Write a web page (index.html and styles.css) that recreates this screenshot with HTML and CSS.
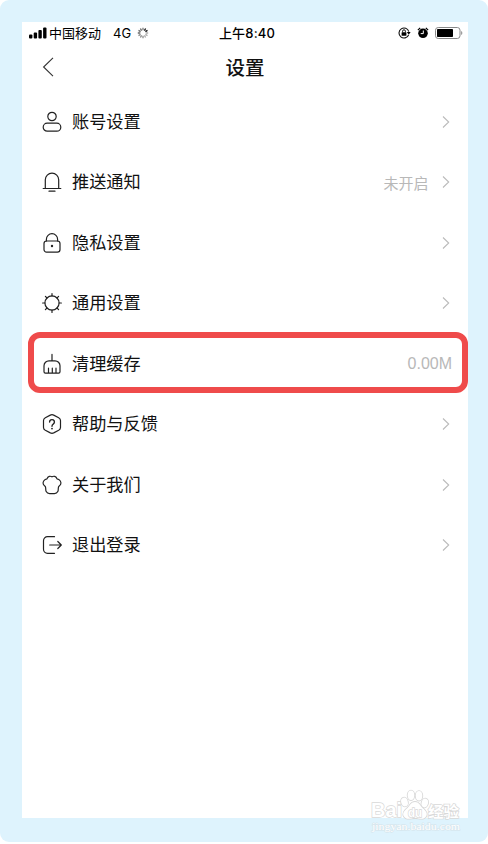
FILE: index.html
```html
<!DOCTYPE html>
<html lang="zh">
<head>
    <meta charset="UTF-8">
    <title>设置</title>
    <link rel="stylesheet" href="styles.css">
</head>
<body>

    <div class="frame">
        <div class="screen">
            <div class="status-bar">
                <div class="status-left">
                    <svg class="signal" width="18" height="12" viewBox="0 0 18 12">
                        <rect x="0" y="7.5" width="3.4" height="4" rx="1"/>
                        <rect x="4.7" y="5.5" width="3.4" height="6" rx="1"/>
                        <rect x="9.4" y="3" width="3.4" height="8.5" rx="1"/>
                        <rect x="14.1" y="0.5" width="3.4" height="11" rx="1"/>
                    </svg>
                    <span class="carrier">中国移动</span>
                    <span class="network">4G</span>
                    <svg class="spinner" width="12" height="12" viewBox="-6 -6 12 12">
                        <path d="M0-5.2V-2.7" stroke="#777"/>
                        <path d="M2.6-4.5 1.4-2.4M4.5-2.6 2.4-1.4" stroke="#111"/>
                        <path d="M5.2 0H2.7M4.5 2.6 2.4 1.4M2.6 4.5 1.4 2.4" stroke="#aaa"/>
                        <path d="M0 5.2V2.7M-2.6 4.5-1.4 2.4M-4.5 2.6-2.4 1.4" stroke="#888"/>
                        <path d="M-5.2 0H-2.7M-4.5-2.6-2.4-1.4M-2.6-4.5-1.4-2.4" stroke="#666"/>
                    </svg>
                </div>
                <div class="clock">上午8:40</div>
                <div class="status-right">
                    <svg class="rotation-lock" width="13" height="12" viewBox="0 0 13 12">
                        <path d="M10.6 8A5 5 0 1 1 10.8 4.6" fill="none" stroke="#111" stroke-width="1.1"/>
                        <path d="M8.8 5h3.8l-1.8 2.7z"/>
                        <rect x="3.6" y="5.2" width="4.8" height="3.6" rx=".5"/>
                        <path d="M4.6 5.4V4.2a1.4 1.4 0 0 1 2.8 0v1.2" fill="none" stroke="#111"/>
                    </svg>
                    <svg class="alarm" width="12" height="12" viewBox="0 0 12 12">
                        <circle cx="6" cy="6.3" r="4.8"/>
                        <path d="M.9 3.1 3.2.9M8.8.9l2.3 2.2" stroke="#000" stroke-width="1.3"/>
                        <path d="M6.3 3.5v3.1H3.7" fill="none" stroke="#fff"/>
                    </svg>
                    <svg class="battery" width="28" height="12" viewBox="0 0 28 12">
                        <rect x=".5" y=".5" width="24.5" height="11" rx="2.7" fill="none" stroke="#888"/>
                        <rect x="2" y="2" width="16" height="8" rx=".8"/>
                        <path d="M26.2 4v4c1.5-.6 1.5-3.4 0-4z" fill="#888"/>
                    </svg>
                </div>
            </div>

            <div class="nav-bar">
                <svg class="back" width="12" height="20" viewBox="0 0 12 20"><path d="M11 .8 1.6 10l9.4 9.2"/></svg>
                <h1>设置</h1>
            </div>

            <div class="menu">
                <div class="menu-item">
                    <svg class="icon" viewBox="0 0 20 20">
                        <circle cx="10" cy="4.5" r="4.2"/>
                        <rect x="1.2" y="11.2" width="17.6" height="8" rx="4"/>
                    </svg>
                    <span class="label">账号设置</span>
                    <svg class="arrow" viewBox="0 0 8 12"><path d="M1 .5 6.7 6 1 11.5"/></svg>
                </div>
                <div class="menu-item">
                    <svg class="icon" viewBox="0 0 20 20">
                        <path d="M3.3 16.5V7.8a6.7 6.7 0 0 1 13.4 0v8.7M1.2 16.5h17.6M7 19.2h6"/>
                    </svg>
                    <span class="label">推送通知</span>
                    <span class="value">未开启</span>
                    <svg class="arrow" viewBox="0 0 8 12"><path d="M1 .5 6.7 6 1 11.5"/></svg>
                </div>
                <div class="menu-item">
                    <svg class="icon" viewBox="0 0 20 20">
                        <rect x="2" y="8" width="16" height="11.2" rx="2.6"/>
                        <path d="M4.4 8V6.3a5.6 5.6 0 0 1 11.2 0V8"/>
                        <circle class="dot" cx="10" cy="13" r="1.2"/>
                    </svg>
                    <span class="label">隐私设置</span>
                    <svg class="arrow" viewBox="0 0 8 12"><path d="M1 .5 6.7 6 1 11.5"/></svg>
                </div>
                <div class="menu-item">
                    <svg class="icon" viewBox="0 0 20 20">
                        <circle cx="10" cy="10" r="7.1"/>
                        <path d="M10 2.9V.6M10 17.1v2.3M2.9 10H.6M17.1 10h2.3M5 5 3.4 3.400M15 5l1.6-1.6M5 15l-1.6 1.6M15 15l1.6 1.6"/>
                    </svg>
                    <span class="label">通用设置</span>
                    <svg class="arrow" viewBox="0 0 8 12"><path d="M1 .5 6.7 6 1 11.5"/></svg>
                </div>
                <div class="menu-item marked">
                    <svg class="icon" viewBox="0 0 20 20">
                        <path d="M10 .4v6.4M3.4 19.2Q2 19.2 2 17.8v-6a5 5 0 0 1 5-5h6a5 5 0 0 1 5 5v6q0 1.4-1.4 1.4zM6.5 19v-4.8M10.3 19v-4.8M14 19v-4.8"/>
                    </svg>
                    <span class="label">清理缓存</span>
                    <span class="value size">0.00M</span>
                </div>
                <div class="menu-item">
                    <svg class="icon" viewBox="0 0 20 20">
                        <path d="M8.3 1.1q1.7-.8 3.4 0l5 2.6q1.8 1 1.8 2.8v7q0 1.8-1.8 2.8l-5 2.6q-1.7.8-3.4 0l-5-2.6q-1.8-1-1.8-2.8v-7q0-1.8 1.8-2.8z"/>
                        <path d="M7.6 8a2.4 2.4 0 1 1 3.6 2.1q-1.2.7-1.2 2.1" stroke-width="1.4"/>
                        <circle class="dot" cx="10" cy="14.6" r=".9"/>
                    </svg>
                    <span class="label">帮助与反馈</span>
                    <svg class="arrow" viewBox="0 0 8 12"><path d="M1 .5 6.7 6 1 11.5"/></svg>
                </div>
                <div class="menu-item">
                    <svg class="icon" viewBox="0 0 20 20">
                        <path d="M10 1.9C8.600.8 5.800.900 5 3.900 2.300 4.300.6 6.800 1.200 8.900c.4 1.400 1.800 2 2.300 3.200.5 1.300-.1 2.900.7 4.500.7 1.400 1.700 2.100 3.400 2.100h4.800c1.700 0 2.700-.7 3.400-2.100.8-1.600.2-3.200.7-4.500.5-1.200 1.900-1.800 2.300-3.200.6-2.100-1.100-4.600-3.800-5C14.200.9 11.400.8 10 1.900z"/>
                    </svg>
                    <span class="label">关于我们</span>
                    <svg class="arrow" viewBox="0 0 8 12"><path d="M1 .5 6.7 6 1 11.5"/></svg>
                </div>
                <div class="menu-item">
                    <svg class="icon" viewBox="0 0 20 20">
                        <path d="M12.5 1.7H5.5a4 4 0 0 0-4 4v8.6a4 4 0 0 0 4 4h7M7.700 10h11.5M15.8 6.5l3.5 3.5-3.5 3.5"/>
                    </svg>
                    <span class="label">退出登录</span>
                    <svg class="arrow" viewBox="0 0 8 12"><path d="M1 .5 6.7 6 1 11.5"/></svg>
                </div>
            </div>
        </div>

        <svg class="watermark" width="100" height="50" viewBox="0 0 100 50">
            <text class="wm-logo" x="11" y="30" textLength="31" lengthAdjust="spacingAndGlyphs">Bai</text>
            <g class="paw">
                <ellipse cx="44.5" cy="15" rx="3.3" ry="4.4" transform="rotate(-15 44.5 15)"/>
                <ellipse cx="51" cy="8.3" rx="3.3" ry="4.7"/>
                <ellipse cx="59" cy="8.8" rx="3.3" ry="4.7"/>
                <ellipse cx="64.8" cy="16" rx="3.2" ry="4.4" transform="rotate(15 64.8 16)"/>
                <path d="M55 15c-4 0-5 3.5-7.5 6-3.5 3-5.5 5.5-3.5 8.5 2.5 4 7 1.5 11 1.5s8.5 2.5 11-1.5c2-3 0-5.5-3.5-8.5-2.5-2.5-3.5-6-7.5-6z"/>
            </g>
            <text class="wm-du" x="48" y="30" textLength="14" lengthAdjust="spacingAndGlyphs">du</text>
            <text class="wm-cn" x="68" y="30" textLength="31" lengthAdjust="spacingAndGlyphs">经验</text>
            <text class="wm-url" x="12" y="43" textLength="88" lengthAdjust="spacingAndGlyphs">jingyan.baidu.com</text>
        </svg>
    </div>

</body>
</html>
```

FILE: styles.css
```css
body {
    margin: 0;
    background-color: #fff;
    color: #111;
    font-family: "Liberation Sans", "Noto Sans CJK SC", sans-serif;
}
.frame {
    position: relative;
    box-sizing: border-box;
    width: 488px;
    height: 842px;
    padding: 22px 20px 24px 22px;
    border-radius: 9px;
    background-color: #def3fd;
}
.screen {
    height: 796px;
    background-color: #fff;
}

/* status bar */
.status-bar {
    display: grid;
    grid-template-columns: 1fr auto 1fr;
    align-items: center;
    height: 23px;
    padding: 0 5px 0 7px;
    font-size: 13px;
    line-height: 23px;
    color: #000;
}
.status-left, .status-right {
    display: flex;
    align-items: center;
}
.status-left svg, .status-right svg {
    margin-bottom: 1px;
}
.status-right {
    justify-content: flex-end;
}
.carrier {
    margin-left: 2px;
}
.network {
    margin-left: 12px;
    font-family: Inter, sans-serif;
}
.spinner {
    margin-left: 6px;
    fill: none;
    stroke-width: 1.3;
}
.clock {
    padding-left: 2px;
    font-family: Inter, "Noto Sans CJK SC", sans-serif;
    font-weight: 500;
    letter-spacing: .2px;
}
.alarm {
    margin-left: 6px;
}
.battery {
    margin-left: 6px;
}

/* title */
.nav-bar {
    display: grid;
    grid-template-columns: 1fr auto 1fr;
    align-items: center;
    height: 46.5px;
    padding: 0 20px;
}
.nav-bar h1 {
    margin: 0;
    font-size: 19.5px;
    font-weight: 500;
    line-height: 45px;
}
.back {
    margin-bottom: 3px;
    fill: none;
    stroke: #333;
    stroke-width: 1.1;
}

/* settings list */
.menu-item {
    position: relative;
    display: flex;
    align-items: center;
    box-sizing: border-box;
    height: 60.5px;
    padding: 0 18px 0 20.4px;
}
.icon {
    width: 20px;
    height: 20px;
    margin-right: 9.6px;
    overflow: visible;
    fill: none;
    stroke: #222;
    stroke-width: 1.2;
    stroke-linecap: round;
    stroke-linejoin: round;
}
.icon .dot {
    fill: #222;
    stroke: none;
}
.label {
    flex: 1;
    font-size: 17.2px;
    line-height: 26px;
}
.value {
    margin-right: 13.5px;
    font-size: 15px;
    color: #b8b8b8;
}
.value.size {
    margin-right: -2px;
    font-size: 16px;
}
.arrow {
    width: 8px;
    height: 12px;
    fill: none;
    stroke: #bbb;
    stroke-width: 1.1;
}
.marked::after {
    content: "";
    position: absolute;
    top: -1.5px;
    right: 0;
    bottom: 1px;
    left: 6px;
    border: 6px solid #ef4b4b;
    border-radius: 12px;
}

/* watermark over the corner */
.watermark {
    position: absolute;
    right: 28px;
    bottom: 5px;
    overflow: visible;
    fill: #fff;
    stroke: #d8d8d8;
    stroke-width: 1.4;
    paint-order: stroke;
}
.paw {
    stroke-width: 1.8;
}
.wm-logo, .wm-du {
    font: bold 20px "Liberation Sans", sans-serif;
}
.wm-du {
    font-size: 13px;
}
.wm-cn {
    font: bold 15px "Noto Sans CJK SC", sans-serif;
}
.wm-url {
    font: 11px "Liberation Serif", serif;
    stroke: #d5e3ea;
    stroke-width: 1;
}
```
